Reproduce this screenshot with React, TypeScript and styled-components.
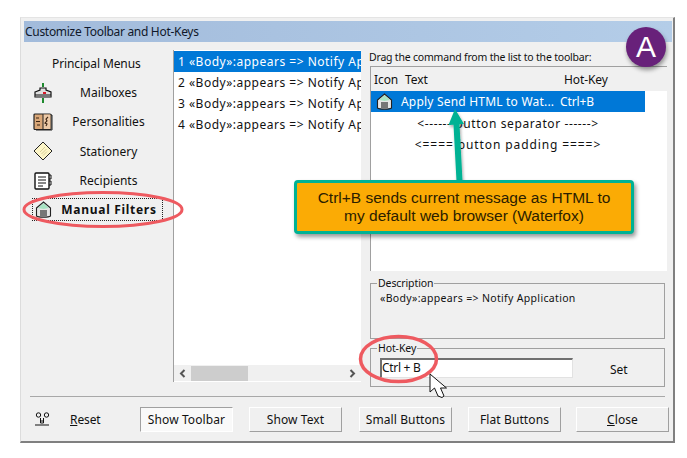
import React from 'react';
import styled, { createGlobalStyle } from 'styled-components';

const GlobalStyle = createGlobalStyle`
  html, body {
    margin: 0;
    padding: 0;
    background: #ffffff;
  }
  body {
    font-family: "Noto Sans", "DejaVu Sans", sans-serif;
    font-size: 12px;
    letter-spacing: -0.1px;
    color: #111;
  }
`;

const Page = styled.div`
  position: relative;
  width: 687px;
  height: 458px;
  padding: 17px 0 0 20px;
  box-sizing: border-box;
  overflow: hidden;
`;

const Frame = styled.div`
  width: 655px;
  height: 426px;
  box-sizing: border-box;
  padding: 3px 1px 0 3px;
  background: #f0f0f0;
  border-top: 1px solid #e4e4e4;
  border-left: 1px solid #dcdcdc;
  border-right: 2px solid #808080;
  border-bottom: 2px solid #808080;
  display: flex;
  flex-direction: column;
`;

const TitleBar = styled.div`
  height: 21px;
  flex: none;
  display: flex;
  align-items: center;
  padding-left: 1px;
  letter-spacing: -0.3px;
  color: #10182a;
  background: linear-gradient(90deg, #a2bbdb, #b4cde8);
`;

const Main = styled.div`
  flex: none;
  height: 345px;
  padding-top: 9px;
  display: flex;
`;

const Sidebar = styled.nav`
  width: 149px;
  flex: none;
  display: flex;
  flex-direction: column;
`;

const SidebarTitle = styled.div`
  height: 27px;
  line-height: 26px;
  padding-left: 28px;
`;

const SidebarItem = styled.div<{ $active?: boolean }>`
  height: 29.3px;
  margin-left: 5px;
  margin-right: ${({ $active }) => ($active ? '7px' : '0')};
  padding-left: 2px;
  padding-right: ${({ $active }) => ($active ? '3px' : '11px')};
  box-sizing: border-box;
  display: flex;
  align-items: center;
  font-weight: ${({ $active }) => ($active ? 700 : 400)};
  letter-spacing: ${({ $active }) => ($active ? '0.7px' : '0')};
  outline: ${({ $active }) => ($active ? '1px dotted #222' : 'none')};
  outline-offset: -4px;
`;

const SidebarIcon = styled.span`
  width: 24px;
  height: 24px;
  flex: none;
  display: flex;
  align-items: center;
  justify-content: center;
`;

const SidebarLabel = styled.span`
  flex: 1;
  text-align: center;
`;

const FilterList = styled.div`
  width: 188px;
  height: 332px;
  margin-top: -1px;
  flex: none;
  box-sizing: border-box;
  background: #fff;
  border-left: 1px solid #a0a0a0;
  display: flex;
  flex-direction: column;
`;

const FilterRows = styled.div`
  flex: 1;
  overflow: hidden;
  padding-top: 1px;
`;

const FilterRow = styled.div<{ $selected?: boolean }>`
  height: 21px;
  line-height: 21px;
  padding-left: 4px;
  white-space: nowrap;
  letter-spacing: 0.5px;
  color: ${({ $selected }) => ($selected ? '#fff' : '#111')};
  background: ${({ $selected }) => ($selected ? '#0078d7' : 'transparent')};
`;

const ScrollBar = styled.div`
  height: 16px;
  margin-bottom: 1px;
  flex: none;
  display: flex;
  align-items: center;
  background: #f0f0f0;
  color: #555;
`;

const ScrollArrow = styled.span`
  width: 17px;
  flex: none;
  display: flex;
  justify-content: center;
`;

const ScrollThumb = styled.div`
  width: 57px;
  height: 15px;
  background: #cdcdcd;
`;

const ScrollTrack = styled.div`
  flex: 1;
`;

const RightPane = styled.div`
  margin-left: 8px;
  width: 298px;
  flex: none;
  display: flex;
  flex-direction: column;
`;

const DragLabel = styled.div`
  height: 15px;
  line-height: 13px;
  font-size: 10.5px;
  letter-spacing: -0.2px;
`;

const CommandList = styled.div`
  margin-left: 1px;
  height: 205px;
  flex: none;
  box-sizing: border-box;
  background: #fff;
  border-top: 1px solid #a0a0a0;
  border-left: 1px solid #a0a0a0;
`;

const CommandHeader = styled.div`
  height: 24px;
  display: grid;
  grid-template-columns: 31px 159px 1fr;
  align-items: center;
  padding-left: 3px;
  background: #f0f0f0;
`;

const CommandRow = styled.div`
  width: 274px;
  height: 21px;
  display: flex;
  align-items: center;
  box-sizing: border-box;
  padding-left: 5px;
  color: #fff;
  background: #0078d7;
  white-space: nowrap;
`;

const CommandText = styled.span`
  margin-left: 8px;
  width: 159px;
  flex: none;
  letter-spacing: 0.2px;
`;

const SeparatorRow = styled.div<{ $spacing: number }>`
  width: 274px;
  height: 21px;
  line-height: 23px;
  text-align: center;
  white-space: pre;
  letter-spacing: ${({ $spacing }) => $spacing}px;
`;

const Group = styled.fieldset<{ $height: number; $top: number }>`
  margin: ${({ $top }) => $top}px 0 0 1px;
  padding: 0 0 0 9px;
  width: 295px;
  height: ${({ $height }) => $height}px;
  box-sizing: border-box;
  border: 1px solid #a0a0a0;
  min-inline-size: 0;
`;

const GroupLegend = styled.legend`
  margin-left: -3px;
  padding: 0 1px;
  font-size: 10.5px;
  letter-spacing: -0.1px;
  line-height: 11px;
`;

const DescriptionText = styled.div`
  font-size: 10.5px;
  margin-top: 2px;
  letter-spacing: 0.33px;
`;

const HotKeyRow = styled.div`
  display: flex;
  align-items: center;
  margin-top: 4px;
`;

const HotKeyInput = styled.div`
  width: 193px;
  height: 20px;
  box-sizing: border-box;
  padding: 0;
  line-height: 15px;
  letter-spacing: -0.3px;
  background: #fff;
  border: 1px solid #e2e2e2;
  border-top: 2px solid #707070;
  border-left: 2px solid #707070;
`;

const SetLabel = styled.span`
  margin-left: 37px;
  margin-top: 2px;
`;

const Divider = styled.div`
  height: 1px;
  flex: none;
  margin: 0 7px 0 6px;
  background: #a8a8a8;
`;

const Footer = styled.div`
  flex: 1;
  display: flex;
  align-items: center;
  padding: 10px 7px 9px 11px;
`;

const ResetIcon = styled.span`
  width: 20px;
  flex: none;
  display: flex;
`;

const ResetLabel = styled.span`
  margin-left: 15px;
  width: 70px;
  flex: none;
`;

const Underlined = styled.span`
  text-decoration: underline;
`;

const FooterButton = styled.button<{ $pressed?: boolean; $gap: number }>`
  width: 93px;
  height: 25px;
  margin-left: ${({ $gap }) => $gap}px;
  padding: 0;
  flex: none;
  font: inherit;
  letter-spacing: 0.1px;
  color: #111;
  background: ${({ $pressed }) => ($pressed ? '#f9f9f9' : '#f0f0f0')};
  border: 1px solid;
  border-color: ${({ $pressed }) =>
    $pressed ? '#a0a0a0 #fff #fff #a0a0a0' : '#fff #a0a0a0 #a0a0a0 #fff'};
`;

const Badge = styled.div`
  position: absolute;
  left: 626px;
  top: 27px;
  width: 40px;
  height: 40px;
  border-radius: 50%;
  display: flex;
  align-items: center;
  justify-content: center;
  font-family: "Liberation Sans", sans-serif;
  font-size: 30px;
  letter-spacing: 0;
  color: #fff;
  background: #68217a;
  box-shadow: 1px 3px 4px rgba(0, 0, 0, 0.4);
`;

const Callout = styled.div`
  position: absolute;
  left: 294px;
  top: 180px;
  width: 340px;
  height: 54px;
  box-sizing: border-box;
  display: flex;
  align-items: center;
  justify-content: center;
  text-align: center;
  padding: 0 6px;
  font-family: "Liberation Sans", sans-serif;
  font-size: 15.5px;
  letter-spacing: 0;
  line-height: 18px;
  color: #2b2000;
  background: #fbab05;
  border: 3px solid #00b294;
  border-radius: 4px;
  box-shadow: 2px 3px 4px rgba(0, 0, 0, 0.4);
`;

const OverlaySvg = styled.svg`
  position: absolute;
  left: 0;
  top: 0;
  pointer-events: none;
`;

const MailboxIcon = () => (
  <svg width="20" height="20" viewBox="0 0 20 20">
    <path d="M10 0v4M10 15v5" stroke="#1e8a2e" strokeWidth="2" />
    <path d="M2 9l5-2V5h6v2l5 2v5H2z" fill="#e0e0e0" stroke="#111" strokeWidth="1.2" />
    <path d="M2 12h16" stroke="#111" />
    <rect x="2.6" y="12.5" width="14.8" height="1.6" fill="#777" />
    <rect x="10" y="9" width="3" height="2" fill="#d81a2a" />
  </svg>
);

const PersonalitiesIcon = () => (
  <svg width="20" height="18" viewBox="0 0 20 18">
    <rect x="1" y="1" width="17" height="15.5" rx="1" fill="#d9a778" stroke="#222" strokeWidth="1.2" />
    <rect x="10" y="1.6" width="7.4" height="14.4" fill="#ecc9a6" />
    <path d="M10 1v15.5" stroke="#222" />
    <path d="M18 2h1v15H3v-.5" fill="none" stroke="#222" />
    <path d="M3 5h3M3 8.5h4M4 12h3" fill="none" stroke="#3a2413" strokeWidth="1.2" />
    <path d="M15 4l-2 2 1 2-2 2 2 1-1 2" fill="none" stroke="#3a2413" strokeWidth="1.1" />
  </svg>
);

const StationeryIcon = () => (
  <svg width="20" height="20" viewBox="0 0 20 20">
    <path d="M10 1l9 9-9 9-9-9z" fill="#fdf6c8" stroke="#222" />
    <path d="M7 11l5-5M8.5 13l5-5M10 14.5l4-4" stroke="#d9cf9a" />
  </svg>
);

const RecipientsIcon = () => (
  <svg width="18" height="18" viewBox="0 0 18 18">
    <rect x="1" y="1" width="14" height="16" rx="1" fill="#fff" stroke="#111" strokeWidth="1.4" />
    <path d="M4 5h8M4 8h8M4 11h8M4 14h5" stroke="#111" />
    <path d="M15 3h2v4h-2M15 9h2v4h-2" fill="none" stroke="#111" />
  </svg>
);

const HouseIcon = () => (
  <svg width="17" height="17" viewBox="0 0 17 17">
    <path d="M1.5 7L8.5 1l7 6v8c-2 1.5-12 1.5-14 0z" fill="#e6e6e6" stroke="#222" strokeWidth="1.1" />
    <path d="M3 7l5.5-4.8L14 7l-5.5 1z" fill="#a7e3c3" />
    <rect x="5" y="9" width="7" height="6.5" fill="#777" />
  </svg>
);

const ResetGlyph = () => (
  <svg width="15" height="15" viewBox="0 0 15 15">
    <circle cx="3.5" cy="3" r="2.2" fill="none" stroke="#111" />
    <circle cx="11.5" cy="3" r="2.2" fill="none" stroke="#111" />
    <path d="M5 9h4M5.5 6v5h3V6M0 13h14" fill="none" stroke="#111" />
  </svg>
);

const Chevron = ({ right }: { right?: boolean }) => (
  <svg width="7" height="9" viewBox="0 0 7 9">
    <path
      d={right ? 'M1.5 1l3.5 3.5L1.5 8' : 'M5.5 1L2 4.5 5.5 8'}
      fill="none"
      stroke="#555"
      strokeWidth="2"
    />
  </svg>
);

const menus = [
  { label: 'Mailboxes', icon: <MailboxIcon /> },
  { label: 'Personalities', icon: <PersonalitiesIcon /> },
  { label: 'Stationery', icon: <StationeryIcon /> },
  { label: 'Recipients', icon: <RecipientsIcon /> },
];

const filters = [1, 2, 3, 4];

const footerButtons = [
  { label: 'Show Toolbar', gap: 0, pressed: true },
  { label: 'Show Text', gap: 16 },
  { label: 'Small Buttons', gap: 17 },
  { label: 'Flat Buttons', gap: 16 },
];

const App: React.FC = () => (
  <Page>
    <GlobalStyle />
    <Frame>
      <TitleBar>Customize Toolbar and Hot-Keys</TitleBar>
      <Main>
        <Sidebar>
          <SidebarTitle>Principal Menus</SidebarTitle>
          {menus.map((m) => (
            <SidebarItem key={m.label}>
              <SidebarIcon>{m.icon}</SidebarIcon>
              <SidebarLabel>{m.label}</SidebarLabel>
            </SidebarItem>
          ))}
          <SidebarItem $active>
            <SidebarIcon>
              <HouseIcon />
            </SidebarIcon>
            <SidebarLabel>Manual Filters</SidebarLabel>
          </SidebarItem>
        </Sidebar>

        <FilterList>
          <FilterRows>
            {filters.map((n) => (
              <FilterRow key={n} $selected={n === 1}>
                {n} «Body»:appears =&gt; Notify Application
              </FilterRow>
            ))}
          </FilterRows>
          <ScrollBar>
            <ScrollArrow>
              <Chevron />
            </ScrollArrow>
            <ScrollThumb />
            <ScrollTrack />
            <ScrollArrow>
              <Chevron right />
            </ScrollArrow>
          </ScrollBar>
        </FilterList>

        <RightPane>
          <DragLabel>Drag the command from the list to the toolbar:</DragLabel>
          <CommandList>
            <CommandHeader>
              <span>Icon</span>
              <span>Text</span>
              <span>Hot-Key</span>
            </CommandHeader>
            <CommandRow>
              <HouseIcon />
              <CommandText>Apply Send HTML to Wat...</CommandText>
              <span>Ctrl+B</span>
            </CommandRow>
            <SeparatorRow $spacing={0.6}>{'<------ button separator ------>'}</SeparatorRow>
            <SeparatorRow $spacing={0.9}>{'<==== button padding ====>'}</SeparatorRow>
          </CommandList>

          <Group $height={61} $top={7}>
            <GroupLegend>Description</GroupLegend>
            <DescriptionText>«Body»:appears =&gt; Notify Application</DescriptionText>
          </Group>

          <Group $height={44} $top={4}>
            <GroupLegend>Hot-Key</GroupLegend>
            <HotKeyRow>
              <HotKeyInput>Ctrl + B</HotKeyInput>
              <SetLabel>Set</SetLabel>
            </HotKeyRow>
          </Group>
        </RightPane>
      </Main>

      <Divider />

      <Footer>
        <ResetIcon>
          <ResetGlyph />
        </ResetIcon>
        <ResetLabel>
          <Underlined>R</Underlined>eset
        </ResetLabel>
        {footerButtons.map((b) => (
          <FooterButton key={b.label} $gap={b.gap} $pressed={b.pressed}>
            {b.label}
          </FooterButton>
        ))}
        <FooterButton $gap={15}>
          <Underlined>C</Underlined>lose
        </FooterButton>
      </Footer>
    </Frame>

    <OverlaySvg width="687" height="458" viewBox="0 0 687 458">
      <defs>
        <filter id="arrowShadow" x="-50%" y="-20%" width="200%" height="140%">
          <feDropShadow dx="1" dy="2" stdDeviation="1.5" floodOpacity="0.35" />
        </filter>
      </defs>
      <ellipse cx="103" cy="209.5" rx="79" ry="17" fill="none" stroke="#ee5a60" strokeWidth="3" />
      <ellipse cx="398.5" cy="359" rx="38" ry="22.5" fill="none" stroke="#ee5a60" strokeWidth="3.5" />
      <path
        d="M455 109l9 15-4.5.3 3 57h-6l-3-56.6-5 .3z"
        fill="#00b294"
        filter="url(#arrowShadow)"
      />
      <path
        d="M430 374v18l4.5-4 3.5 8 4 1.5 2-1.5-3.5-8h6z"
        fill="#fff"
        stroke="#111"
        strokeWidth="1"
      />
    </OverlaySvg>

    <Callout>
      Ctrl+B sends current message as HTML to
      <br />
      my default web browser (Waterfox)
    </Callout>
    <Badge>A</Badge>
  </Page>
);

export default App;
